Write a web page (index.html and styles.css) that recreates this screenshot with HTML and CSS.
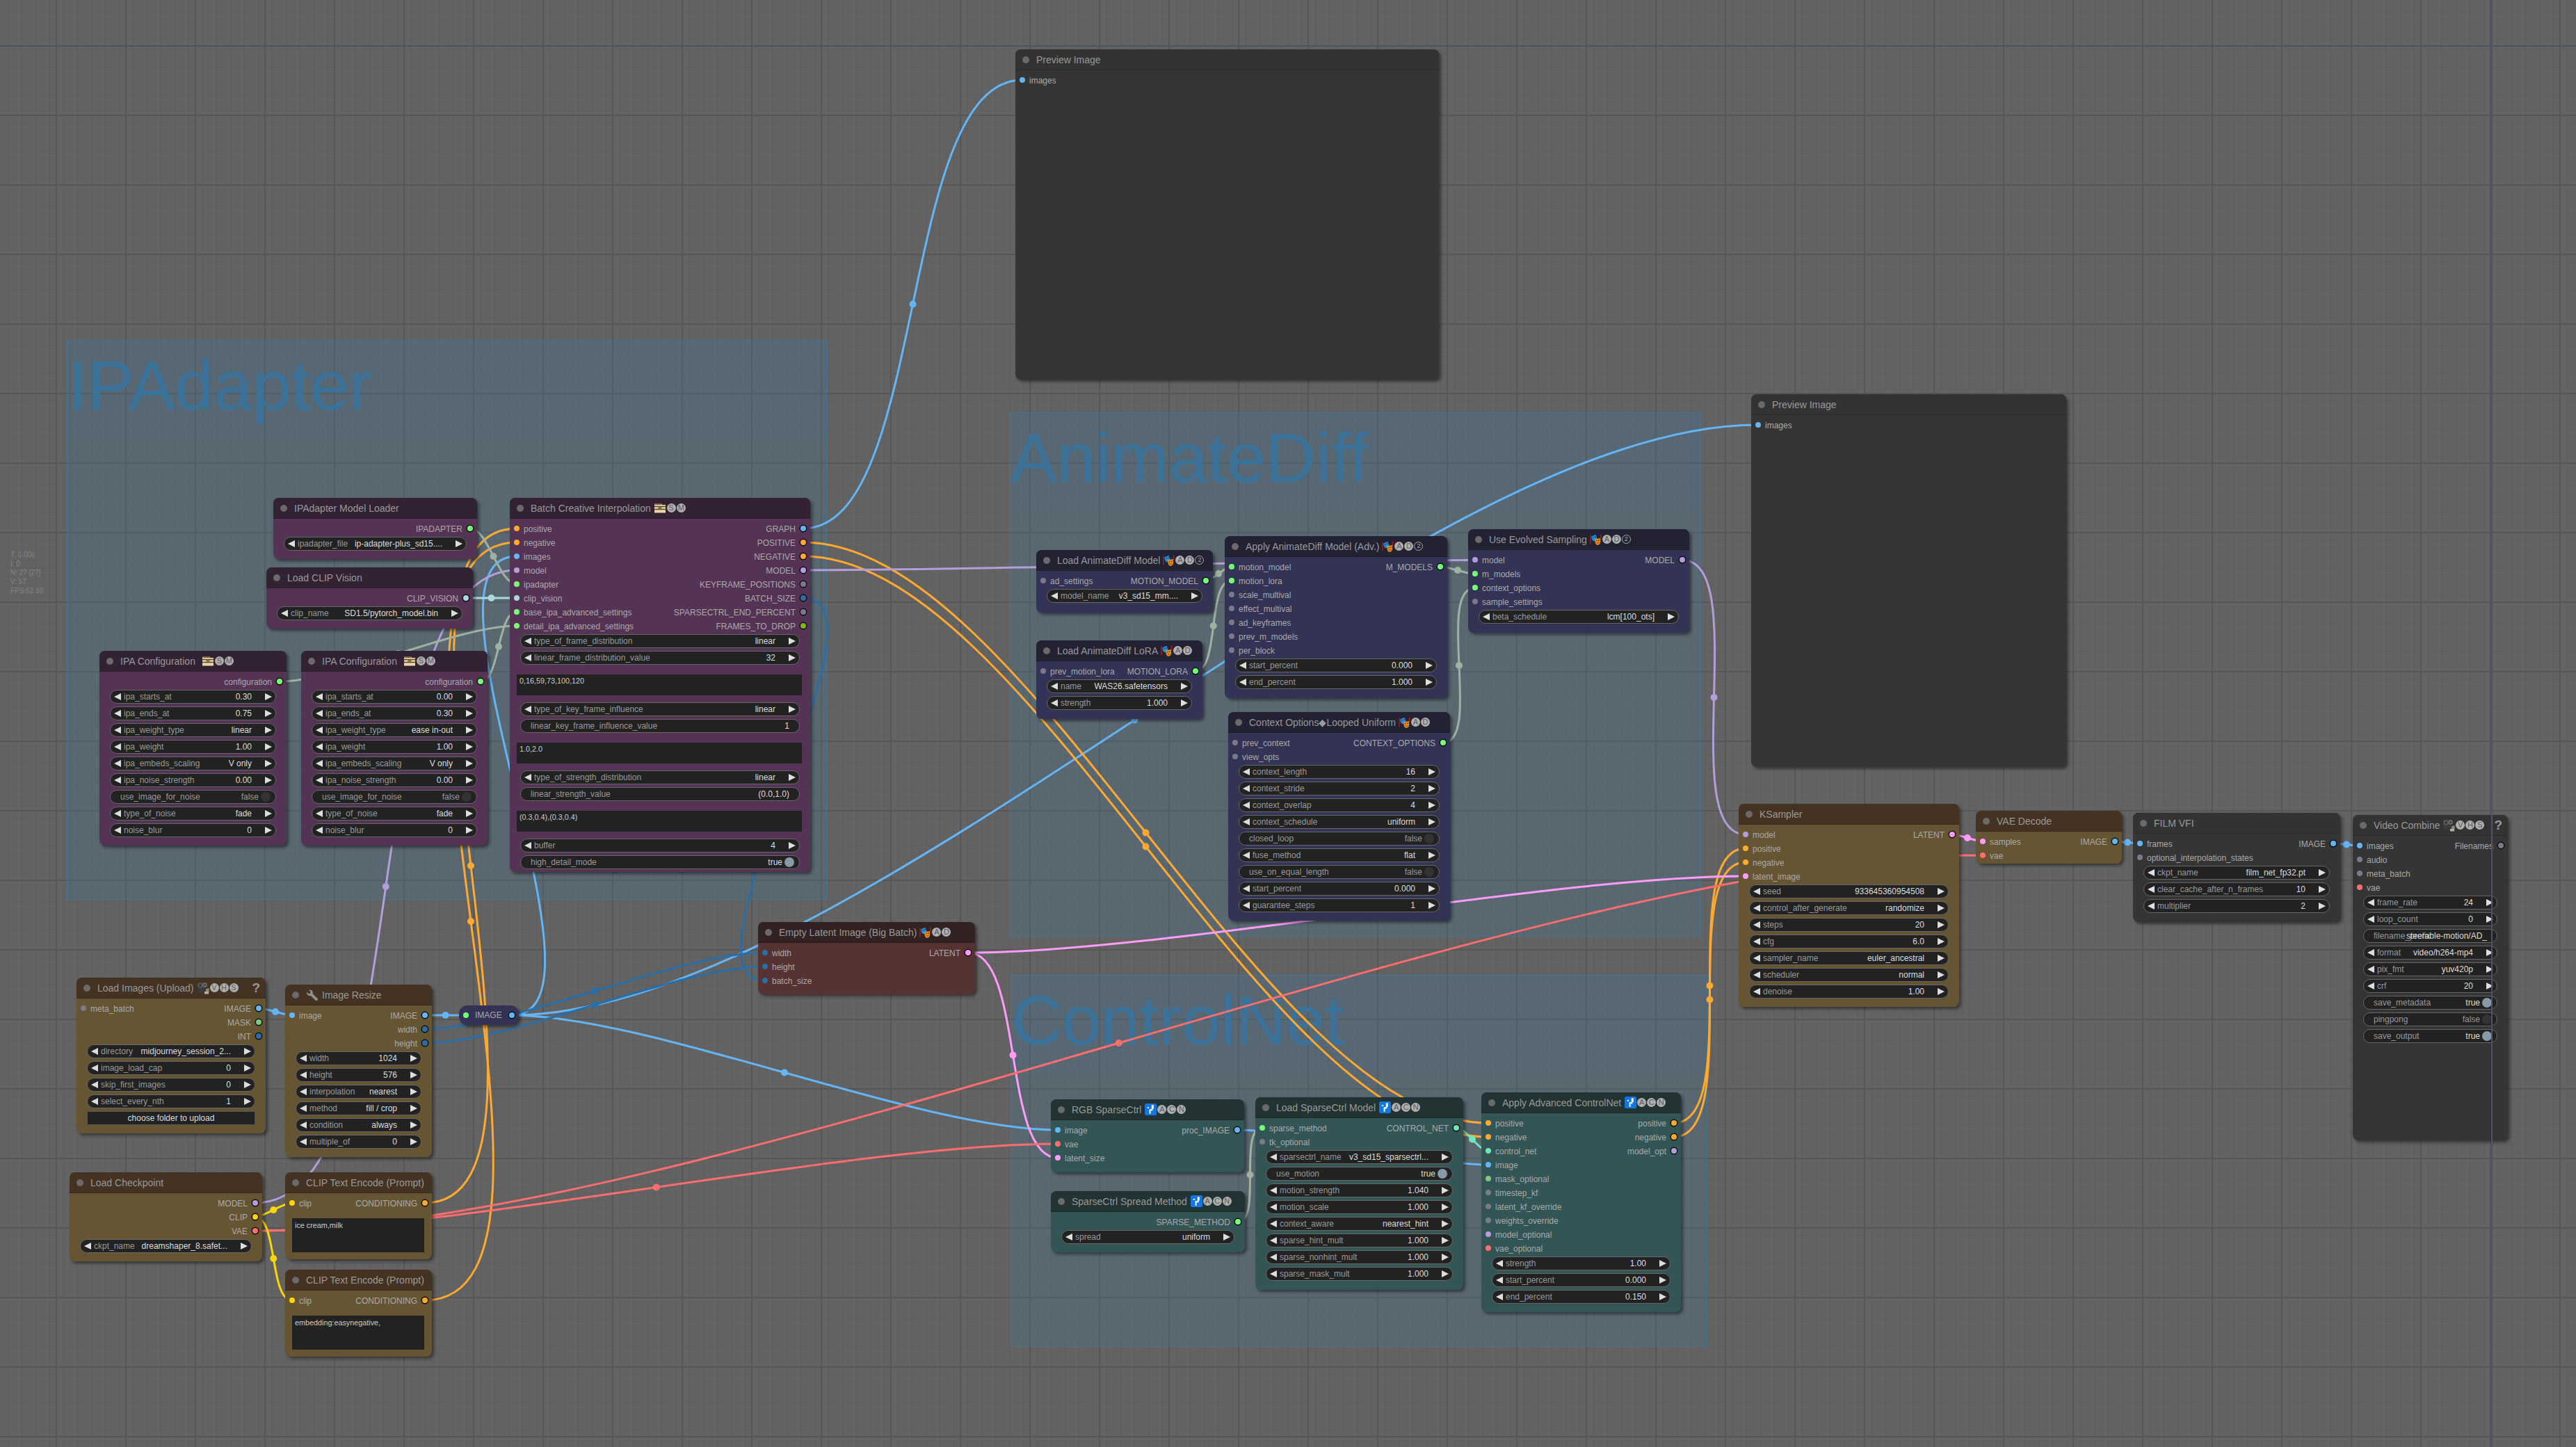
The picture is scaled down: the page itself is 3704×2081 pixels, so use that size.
FILE: index.html
```html
<!DOCTYPE html>
<html lang="en">
<head>
<meta charset="utf-8">
<title>ComfyUI workflow</title>
<link rel="stylesheet" href="styles.css">
</head>
<body>
<svg class="defs" width="0" height="0" aria-hidden="true">
  <symbol id="i-masks" viewBox="0 0 18 18">
    <path d="M1.2 2v13.5M16.6 .8v8" stroke="#b5211b" stroke-width="1.3" fill="none"/>
    <path d="M2.4 4.2 9 1.2l1.8 5.6c.4 2.400-1 4.200-3.200 4.600-2.300.2-3.800-1.200-4.400-3.200z" fill="#1e8fe2"/>
    <circle cx="5.200" cy="5.800" r=".9" fill="#0b3a66"/><circle cx="8.300" cy="4.800" r=".9" fill="#0b3a66"/>
    <path d="M7.600 8.200 15.700 7l.5 5.800c-.4 2.800-2.200 4.500-4.500 4.800-2.300-.6-3.600-2.400-3.700-4.800z" fill="#e38a1f"/>
    <circle cx="10.400" cy="10.600" r=".9" fill="#6b3a08"/><circle cx="13.700" cy="10.200" r=".9" fill="#6b3a08"/>
    <path d="M10.300 14c1.500.8 2.800.6 4-.4" stroke="#6b3a08" stroke-width=".9" fill="none"/>
  </symbol>
  <symbol id="i-box" viewBox="0 0 18 15">
    <path d="M2 1h9l1 2h5v11.500H1V3z" fill="#e8d6a6"/>
    <path d="M1 5.500h16M1 9.500h16M6.500 7.500h5" stroke="#5c4a30" stroke-width="1.300"/>
    <path d="M2 1h9v2H2z" fill="#7a6240"/>
  </symbol>
  <symbol id="i-pass" viewBox="0 0 17 17">
    <rect width="17" height="17" rx="2.500" fill="#1277e0"/>
    <path d="M9.800 2.200h3v5.600h-1.400v2.400H8.600v4.600H6.600V8.200h3.200zM3.800 5h2.400v1.800H3.800z" fill="#fff"/>
  </symbol>
  <symbol id="i-cam" viewBox="0 0 18 18">
    <rect x="1" y="8" width="12" height="8" rx="1" fill="#3a3a3a"/>
    <circle cx="5" cy="5" r="4" fill="#555"/><circle cx="11.500" cy="4.500" r="3.500" fill="#666"/>
    <circle cx="5" cy="5" r="1.300" fill="#222"/><circle cx="11.500" cy="4.500" r="1.100" fill="#222"/>
    <path d="M13 10.500 17.500 9v6L13 13.500z" fill="#8a8a8a"/>
    <rect x="11" y="14" width="6" height="3.500" fill="#b9b29a"/>
  </symbol>
  <symbol id="i-wrench" viewBox="0 0 16 16">
    <path d="M14.800 13.300 7.600 6.100c.5-1.700.1-3.400-1.100-4.500C5.200.4 3.500.1 2 .8l2.700 2.700-.9 1.900-2 .8L-.6 3.500c-.5 1.500-.2 3.200 1 4.400 1.200 1.200 2.900 1.500 4.400 1l7.300 7.200c.4.400 1.100.4 1.500 0l1.200-1.300c.4-.4.400-1.100 0-1.500z" fill="#8f8f8f" transform="translate(1)"/>
  </symbol>
</svg>

<main class="canvas">
  <section class="group g-ipa"><h2>IPAdapter</h2></section>
  <section class="group g-ad"><h2>AnimateDiff</h2></section>
  <section class="group g-cn"><h2>ControlNet</h2></section>

  <svg class="links" width="3704" height="2081" viewBox="0 0 3704 2081" aria-hidden="true">
    <g class="lk l-img">
      <path d="M1155 760C1334.500 760 1290.500 115 1470 115"/><circle cx="1312.500" cy="437.500" r="5"/>
      <path d="M611 1460H670"/><circle cx="640.500" cy="1460" r="5"/>
      <path d="M372 1450C384 1450 408 1460 420 1460"/><circle cx="396" cy="1455" r="5"/>
      <path d="M735 1460C900 1460 578 800 743 800"/><circle cx="739" cy="1130" r="5"/>
      <path d="M735 1460C935.800 1460 1320.200 1625 1521 1625"/><circle cx="1128" cy="1542.500" r="5"/>
      <path d="M1779 1625C1870 1625 2049 1675 2140 1675"/><circle cx="1959.500" cy="1650" r="5"/>
      <path d="M735 1460C1231 1460 2032 611 2528 611"/><circle cx="1631.500" cy="1035.500" r="5"/>
      <path d="M3041 1210C3050 1210 3068 1213 3077 1213"/><circle cx="3059" cy="1211.500" r="5"/>
      <path d="M3354.500 1213C3364 1213 3383.400 1216 3393 1216"/><circle cx="3374" cy="1214.500" r="5"/>
    </g>
    <g class="lk l-int">
      <path d="M1155 860C1293 860 962 1410 1100 1410"/>
      <path d="M611 1480C736 1480 975 1370 1100 1370"/><circle cx="855.500" cy="1425" r="5"/>
      <path d="M611 1500C736 1500 975 1390 1100 1390"/><circle cx="855.500" cy="1445" r="5"/>
    </g>
    <g class="lk l-cond">
      <path d="M1155 780C1478 780 1817 1615 2140 1615"/><circle cx="1647.500" cy="1197.500" r="5"/>
      <path d="M1155 800C1478 800 1817 1635 2140 1635"/><circle cx="1647.500" cy="1217.500" r="5"/>
      <path d="M611 1730C856 1730 498 760 743 760"/><circle cx="677" cy="1245" r="5"/>
      <path d="M611 1870C885.500 1870 468.500 780 743 780"/><circle cx="677" cy="1325" r="5"/>
      <path d="M2407 1615C2509 1615 2408 1220 2510 1220"/><circle cx="2458.500" cy="1417.500" r="5"/>
      <path d="M2407 1635C2509 1635 2408 1240 2510 1240"/><circle cx="2458.500" cy="1437.500" r="5"/>
    </g>
    <g class="lk l-model">
      <path d="M1155 820C1396.500 820 1879.500 805.500 2121 805.500"/>
      <path d="M2419 805.500C2520 805.500 2409 1200 2510 1200"/><circle cx="2464.500" cy="1003" r="5"/>
      <path d="M366.500 1730C612.500 1730 497 820 743 820"/><circle cx="554.750" cy="1275" r="5"/>
    </g>
    <g class="lk l-sage">
      <path d="M676 760C702 760 717 840 743 840"/><circle cx="709.500" cy="800" r="5"/>
      <path d="M402 980C489.600 980 655.400 900 743 900"/><circle cx="572.500" cy="940" r="5"/>
      <path d="M691 980C719 980 715 880 743 880"/><circle cx="717" cy="930" r="5"/>
      <path d="M1734 835C1744.400 835 1760.100 815 1770.500 815"/><circle cx="1752" cy="825" r="5"/>
      <path d="M1719 965C1754 965 1735.500 835 1770.500 835"/><circle cx="1744.750" cy="900" r="5"/>
      <path d="M2071 815C2083.800 815 2108.200 825.500 2121 825.500"/><circle cx="2096" cy="820" r="5"/>
      <path d="M2075 1068C2131.800 1068 2064.200 845.500 2121 845.500"/><circle cx="2098" cy="957" r="5"/>
      <path d="M1780 1757C1815 1757 1780 1622 1815 1622"/><circle cx="1797.500" cy="1689.500" r="5"/>
    </g>
    <g class="lk l-vision">
      <path d="M670 860H743"/><circle cx="706.500" cy="860" r="5"/>
    </g>
    <g class="lk l-latent">
      <path d="M1392 1370C1673 1370 2229 1260 2510 1260"/>
      <path d="M1392 1370C1472.500 1370 1440.500 1665 1521 1665"/><circle cx="1456.500" cy="1517.500" r="5"/>
      <path d="M2806.500 1200C2817.900 1200 2839.600 1210 2851 1210"/><circle cx="2829" cy="1205" r="5"/>
    </g>
    <g class="lk l-vae">
      <path d="M366.500 1770C656.500 1770 1231 1645 1521 1645"/><circle cx="943.750" cy="1707.500" r="5"/>
      <path d="M366.500 1770C1002 1770 2215.400 1230 2851 1230"/><circle cx="1608.750" cy="1500" r="5"/>
    </g>
    <g class="lk l-clip">
      <path d="M366.500 1750C380.500 1750 406 1730 420 1730"/><circle cx="393.250" cy="1740" r="5"/>
      <path d="M366.500 1750C399.500 1750 387 1870 420 1870"/><circle cx="393.250" cy="1810" r="5"/>
    </g>
    <g class="lk l-cnet">
      <path d="M2094 1622C2108 1622 2126 1655 2140 1655"/><circle cx="2117" cy="1638.500" r="5"/>
    </g>
  </svg>

  <article class="node purple n-ipal">
    <header class="tt">IPAdapter Model Loader</header>
    <div class="slots"><div class="in"></div><div class="out"><div class="s c-new">IPADAPTER</div></div></div>
    <div class="ws"><div class="w a"><span>ipadapter_file</span><b>ip-adapter-plus_sd15....</b></div></div>
  </article>

  <article class="node purple n-clipv">
    <header class="tt">Load CLIP Vision</header>
    <div class="slots"><div class="in"></div><div class="out"><div class="s c-vis">CLIP_VISION</div></div></div>
    <div class="ws"><div class="w a"><span>clip_name</span><b>SD1.5/pytorch_model.bin</b></div></div>
  </article>

  <article class="node purple n-ipa1">
    <header class="tt">IPA Configuration<svg class="ic ic-box wide"><use href="#i-box"/></svg><span class="bd">S</span><span class="bd">M</span></header>
    <div class="slots"><div class="in"></div><div class="out"><div class="s c-new">configuration</div></div></div>
    <div class="ws">
      <div class="w a"><span>ipa_starts_at</span><b>0.30</b></div>
      <div class="w a"><span>ipa_ends_at</span><b>0.75</b></div>
      <div class="w a"><span>ipa_weight_type</span><b>linear</b></div>
      <div class="w a"><span>ipa_weight</span><b>1.00</b></div>
      <div class="w a"><span>ipa_embeds_scaling</span><b>V only</b></div>
      <div class="w a"><span>ipa_noise_strength</span><b>0.00</b></div>
      <div class="w t"><span>use_image_for_noise</span><b>false</b><i></i></div>
      <div class="w a"><span>type_of_noise</span><b>fade</b></div>
      <div class="w a"><span>noise_blur</span><b>0</b></div>
    </div>
  </article>

  <article class="node purple n-ipa2">
    <header class="tt">IPA Configuration<svg class="ic ic-box wide"><use href="#i-box"/></svg><span class="bd">S</span><span class="bd">M</span></header>
    <div class="slots"><div class="in"></div><div class="out"><div class="s c-new">configuration</div></div></div>
    <div class="ws">
      <div class="w a"><span>ipa_starts_at</span><b>0.00</b></div>
      <div class="w a"><span>ipa_ends_at</span><b>0.30</b></div>
      <div class="w a"><span>ipa_weight_type</span><b>ease in-out</b></div>
      <div class="w a"><span>ipa_weight</span><b>1.00</b></div>
      <div class="w a"><span>ipa_embeds_scaling</span><b>V only</b></div>
      <div class="w a"><span>ipa_noise_strength</span><b>0.00</b></div>
      <div class="w t"><span>use_image_for_noise</span><b>false</b><i></i></div>
      <div class="w a"><span>type_of_noise</span><b>fade</b></div>
      <div class="w a"><span>noise_blur</span><b>0</b></div>
    </div>
  </article>

  <article class="node purple n-batch">
    <header class="tt">Batch Creative Interpolation<svg class="ic ic-box"><use href="#i-box"/></svg><span class="bd">S</span><span class="bd">M</span></header>
    <div class="slots">
      <div class="in">
        <div class="s c-cond">positive</div><div class="s c-cond">negative</div><div class="s c-img">images</div><div class="s c-model">model</div>
        <div class="s c-new">ipadapter</div><div class="s c-vis">clip_vision</div><div class="s c-new">base_ipa_advanced_settings</div><div class="s c-new">detail_ipa_advanced_settings</div>
      </div>
      <div class="out">
        <div class="s c-img">GRAPH</div><div class="s c-cond">POSITIVE</div><div class="s c-cond">NEGATIVE</div><div class="s c-model">MODEL</div>
        <div class="s c-any">KEYFRAME_POSITIONS</div><div class="s c-int">BATCH_SIZE</div><div class="s c-any">SPARSECTRL_END_PERCENT</div><div class="s c-olive">FRAMES_TO_DROP</div>
      </div>
    </div>
    <div class="ws">
      <div class="w a"><span>type_of_frame_distribution</span><b>linear</b></div>
      <div class="w a"><span>linear_frame_distribution_value</span><b>32</b></div>
      <div class="ta">0,16,59,73,100,120</div>
      <div class="w a"><span>type_of_key_frame_influence</span><b>linear</b></div>
      <div class="w x"><span>linear_key_frame_influence_value</span><b>1</b></div>
      <div class="ta">1.0,2.0</div>
      <div class="w a"><span>type_of_strength_distribution</span><b>linear</b></div>
      <div class="w x"><span>linear_strength_value</span><b>(0.0,1.0)</b></div>
      <div class="ta">(0.3,0.4),(0.3,0.4)</div>
      <div class="w a"><span>buffer</span><b>4</b></div>
      <div class="w t on"><span>high_detail_mode</span><b>true</b><i></i></div>
    </div>
  </article>

  <article class="node yellow n-limg">
    <header class="tt">Load Images (Upload)<svg class="ic ic-cam"><use href="#i-cam"/></svg><span class="bd">V</span><span class="bd">H</span><span class="bd">S</span><span class="q">?</span></header>
    <div class="slots">
      <div class="in"><div class="s c-any">meta_batch</div></div>
      <div class="out"><div class="s c-img">IMAGE</div><div class="s c-mask">MASK</div><div class="s c-int">INT</div></div>
    </div>
    <div class="ws">
      <div class="w a"><span>directory</span><b>midjourney_session_2...</b></div>
      <div class="w a"><span>image_load_cap</span><b>0</b></div>
      <div class="w a"><span>skip_first_images</span><b>0</b></div>
      <div class="w a"><span>select_every_nth</span><b>1</b></div>
      <button class="btn" type="button">choose folder to upload</button>
    </div>
  </article>

  <article class="node yellow n-resize">
    <header class="tt"><svg class="ic ic-wrench"><use href="#i-wrench"/></svg>Image Resize</header>
    <div class="slots">
      <div class="in"><div class="s c-img">image</div></div>
      <div class="out"><div class="s c-img">IMAGE</div><div class="s c-int">width</div><div class="s c-int">height</div></div>
    </div>
    <div class="ws">
      <div class="w a"><span>width</span><b>1024</b></div>
      <div class="w a"><span>height</span><b>576</b></div>
      <div class="w a"><span>interpolation</span><b>nearest</b></div>
      <div class="w a"><span>method</span><b>fill / crop</b></div>
      <div class="w a"><span>condition</span><b>always</b></div>
      <div class="w a"><span>multiple_of</span><b>0</b></div>
    </div>
  </article>

  <div class="reroute n-rr"><div class="s c-new">IMAGE</div><span class="rr-out"></span></div>

  <article class="node yellow n-ckpt">
    <header class="tt">Load Checkpoint</header>
    <div class="slots"><div class="in"></div><div class="out"><div class="s c-model">MODEL</div><div class="s c-clip">CLIP</div><div class="s c-vae">VAE</div></div></div>
    <div class="ws"><div class="w a"><span>ckpt_name</span><b>dreamshaper_8.safet...</b></div></div>
  </article>

  <article class="node yellow n-clip1">
    <header class="tt">CLIP Text Encode (Prompt)</header>
    <div class="slots"><div class="in"><div class="s c-clip">clip</div></div><div class="out"><div class="s c-cond">CONDITIONING</div></div></div>
    <div class="ta wide">ice cream,milk</div>
  </article>

  <article class="node yellow n-clip2">
    <header class="tt">CLIP Text Encode (Prompt)</header>
    <div class="slots"><div class="in"><div class="s c-clip">clip</div></div><div class="out"><div class="s c-cond">CONDITIONING</div></div></div>
    <div class="ta wide">embedding:easynegative,</div>
  </article>

  <article class="node red n-latent">
    <header class="tt">Empty Latent Image (Big Batch)<svg class="ic ic-masks"><use href="#i-masks"/></svg><span class="bd">A</span><span class="bd">D</span></header>
    <div class="slots">
      <div class="in"><div class="s c-int">width</div><div class="s c-int">height</div><div class="s c-int">batch_size</div></div>
      <div class="out"><div class="s c-latent">LATENT</div></div>
    </div>
  </article>

  <article class="node blue n-adm">
    <header class="tt">Load AnimateDiff Model<svg class="ic ic-masks"><use href="#i-masks"/></svg><span class="bd">A</span><span class="bd">D</span><span class="bd ring">2</span></header>
    <div class="slots"><div class="in"><div class="s c-any">ad_settings</div></div><div class="out"><div class="s c-new">MOTION_MODEL</div></div></div>
    <div class="ws"><div class="w a"><span>model_name</span><b>v3_sd15_mm....</b></div></div>
  </article>

  <article class="node blue n-apply">
    <header class="tt">Apply AnimateDiff Model (Adv.)<svg class="ic ic-masks"><use href="#i-masks"/></svg><span class="bd">A</span><span class="bd">D</span><span class="bd ring">2</span></header>
    <div class="slots">
      <div class="in">
        <div class="s c-new">motion_model</div><div class="s c-new">motion_lora</div><div class="s c-any">scale_multival</div><div class="s c-any">effect_multival</div>
        <div class="s c-any">ad_keyframes</div><div class="s c-any">prev_m_models</div><div class="s c-any">per_block</div>
      </div>
      <div class="out"><div class="s c-new">M_MODELS</div></div>
    </div>
    <div class="ws">
      <div class="w a"><span>start_percent</span><b>0.000</b></div>
      <div class="w a"><span>end_percent</span><b>1.000</b></div>
    </div>
  </article>

  <article class="node blue n-evo">
    <header class="tt">Use Evolved Sampling<svg class="ic ic-masks"><use href="#i-masks"/></svg><span class="bd">A</span><span class="bd">D</span><span class="bd ring">2</span></header>
    <div class="slots">
      <div class="in"><div class="s c-model">model</div><div class="s c-new">m_models</div><div class="s c-new">context_options</div><div class="s c-any">sample_settings</div></div>
      <div class="out"><div class="s c-model">MODEL</div></div>
    </div>
    <div class="ws"><div class="w a"><span>beta_schedule</span><b>lcm[100_ots]</b></div></div>
  </article>

  <article class="node blue n-lora">
    <header class="tt">Load AnimateDiff LoRA<svg class="ic ic-masks"><use href="#i-masks"/></svg><span class="bd">A</span><span class="bd">D</span></header>
    <div class="slots"><div class="in"><div class="s c-any">prev_motion_lora</div></div><div class="out"><div class="s c-new">MOTION_LORA</div></div></div>
    <div class="ws">
      <div class="w a"><span>name</span><b>WAS26.safetensors</b></div>
      <div class="w a"><span>strength</span><b>1.000</b></div>
    </div>
  </article>

  <article class="node blue n-ctx">
    <header class="tt">Context Options◆Looped Uniform<svg class="ic ic-masks"><use href="#i-masks"/></svg><span class="bd">A</span><span class="bd">D</span></header>
    <div class="slots">
      <div class="in"><div class="s c-any">prev_context</div><div class="s c-any">view_opts</div></div>
      <div class="out"><div class="s c-new">CONTEXT_OPTIONS</div></div>
    </div>
    <div class="ws">
      <div class="w a"><span>context_length</span><b>16</b></div>
      <div class="w a"><span>context_stride</span><b>2</b></div>
      <div class="w a"><span>context_overlap</span><b>4</b></div>
      <div class="w a"><span>context_schedule</span><b>uniform</b></div>
      <div class="w t"><span>closed_loop</span><b>false</b><i></i></div>
      <div class="w a"><span>fuse_method</span><b>flat</b></div>
      <div class="w t"><span>use_on_equal_length</span><b>false</b><i></i></div>
      <div class="w a"><span>start_percent</span><b>0.000</b></div>
      <div class="w a"><span>guarantee_steps</span><b>1</b></div>
    </div>
  </article>

  <article class="node n-prev1">
    <header class="tt">Preview Image</header>
    <div class="slots"><div class="in"><div class="s c-img">images</div></div></div>
  </article>

  <article class="node n-prev2">
    <header class="tt">Preview Image</header>
    <div class="slots"><div class="in"><div class="s c-img">images</div></div></div>
  </article>

  <article class="node cyan n-rgb">
    <header class="tt">RGB SparseCtrl<svg class="ic ic-pass"><use href="#i-pass"/></svg><span class="bd">A</span><span class="bd">C</span><span class="bd">N</span></header>
    <div class="slots">
      <div class="in"><div class="s c-img">image</div><div class="s c-vae">vae</div><div class="s c-latent">latent_size</div></div>
      <div class="out"><div class="s c-img">proc_IMAGE</div></div>
    </div>
  </article>

  <article class="node cyan n-spread">
    <header class="tt">SparseCtrl Spread Method<svg class="ic ic-pass"><use href="#i-pass"/></svg><span class="bd">A</span><span class="bd">C</span><span class="bd">N</span></header>
    <div class="slots"><div class="in"></div><div class="out"><div class="s c-new">SPARSE_METHOD</div></div></div>
    <div class="ws"><div class="w a"><span>spread</span><b>uniform</b></div></div>
  </article>

  <article class="node cyan n-lsp">
    <header class="tt">Load SparseCtrl Model<svg class="ic ic-pass"><use href="#i-pass"/></svg><span class="bd">A</span><span class="bd">C</span><span class="bd">N</span></header>
    <div class="slots">
      <div class="in"><div class="s c-new">sparse_method</div><div class="s c-any">tk_optional</div></div>
      <div class="out"><div class="s c-cnet">CONTROL_NET</div></div>
    </div>
    <div class="ws">
      <div class="w a"><span>sparsectrl_name</span><b>v3_sd15_sparsectrl...</b></div>
      <div class="w t on"><span>use_motion</span><b>true</b><i></i></div>
      <div class="w a"><span>motion_strength</span><b>1.040</b></div>
      <div class="w a"><span>motion_scale</span><b>1.000</b></div>
      <div class="w a"><span>context_aware</span><b>nearest_hint</b></div>
      <div class="w a"><span>sparse_hint_mult</span><b>1.000</b></div>
      <div class="w a"><span>sparse_nonhint_mult</span><b>1.000</b></div>
      <div class="w a"><span>sparse_mask_mult</span><b>1.000</b></div>
    </div>
  </article>

  <article class="node cyan n-acn">
    <header class="tt">Apply Advanced ControlNet<svg class="ic ic-pass"><use href="#i-pass"/></svg><span class="bd">A</span><span class="bd">C</span><span class="bd">N</span></header>
    <div class="slots">
      <div class="in">
        <div class="s c-cond">positive</div><div class="s c-cond">negative</div><div class="s c-cnet">control_net</div><div class="s c-img">image</div><div class="s c-mask">mask_optional</div>
        <div class="s c-any">timestep_kf</div><div class="s c-any">latent_kf_override</div><div class="s c-any">weights_override</div><div class="s c-model">model_optional</div><div class="s c-vae">vae_optional</div>
      </div>
      <div class="out"><div class="s c-cond">positive</div><div class="s c-cond">negative</div><div class="s c-model">model_opt</div></div>
    </div>
    <div class="ws">
      <div class="w a"><span>strength</span><b>1.00</b></div>
      <div class="w a"><span>start_percent</span><b>0.000</b></div>
      <div class="w a"><span>end_percent</span><b>0.150</b></div>
    </div>
  </article>

  <article class="node yellow n-ks">
    <header class="tt">KSampler</header>
    <div class="slots">
      <div class="in"><div class="s c-model">model</div><div class="s c-cond">positive</div><div class="s c-cond">negative</div><div class="s c-latent">latent_image</div></div>
      <div class="out"><div class="s c-latent">LATENT</div></div>
    </div>
    <div class="ws">
      <div class="w a"><span>seed</span><b>933645360954508</b></div>
      <div class="w a"><span>control_after_generate</span><b>randomize</b></div>
      <div class="w a"><span>steps</span><b>20</b></div>
      <div class="w a"><span>cfg</span><b>6.0</b></div>
      <div class="w a"><span>sampler_name</span><b>euler_ancestral</b></div>
      <div class="w a"><span>scheduler</span><b>normal</b></div>
      <div class="w a"><span>denoise</span><b>1.00</b></div>
    </div>
  </article>

  <article class="node yellow n-vae">
    <header class="tt">VAE Decode</header>
    <div class="slots">
      <div class="in"><div class="s c-latent">samples</div><div class="s c-vae">vae</div></div>
      <div class="out"><div class="s c-img">IMAGE</div></div>
    </div>
  </article>

  <article class="node n-film">
    <header class="tt">FILM VFI</header>
    <div class="slots">
      <div class="in"><div class="s c-img">frames</div><div class="s c-any">optional_interpolation_states</div></div>
      <div class="out"><div class="s c-img">IMAGE</div></div>
    </div>
    <div class="ws">
      <div class="w a"><span>ckpt_name</span><b>film_net_fp32.pt</b></div>
      <div class="w a"><span>clear_cache_after_n_frames</span><b>10</b></div>
      <div class="w a"><span>multiplier</span><b>2</b></div>
    </div>
  </article>

  <article class="node n-video">
    <header class="tt">Video Combine<svg class="ic ic-cam"><use href="#i-cam"/></svg><span class="bd">V</span><span class="bd">H</span><span class="bd">S</span><span class="q">?</span></header>
    <div class="slots">
      <div class="in"><div class="s c-img">images</div><div class="s c-any">audio</div><div class="s c-any">meta_batch</div><div class="s c-vae">vae</div></div>
      <div class="out"><div class="s c-any">Filenames</div></div>
    </div>
    <div class="ws">
      <div class="w a"><span>frame_rate</span><b>24</b></div>
      <div class="w a"><span>loop_count</span><b>0</b></div>
      <div class="w x"><span>filename_prefix</span><b>steerable-motion/AD_</b></div>
      <div class="w a"><span>format</span><b>video/h264-mp4</b></div>
      <div class="w a"><span>pix_fmt</span><b>yuv420p</b></div>
      <div class="w a"><span>crf</span><b>20</b></div>
      <div class="w t on"><span>save_metadata</span><b>true</b><i></i></div>
      <div class="w t"><span>pingpong</span><b>false</b><i></i></div>
      <div class="w t on"><span>save_output</span><b>true</b><i></i></div>
    </div>
  </article>

  <aside class="stats">
    <div>T: 0.00s</div>
    <div>I: 0</div>
    <div>N: 27 [27]</div>
    <div>V: 57</div>
    <div>FPS:62.50</div>
  </aside>
</main>
</body>
</html>
```

FILE: styles.css
```css
* { box-sizing: border-box; }
html, body { margin: 0; padding: 0; background: #636363; }
.defs { position: absolute; }

.canvas {
  position: relative;
  width: 3704px;
  height: 2081px;
  overflow: hidden;
  font: 12px/1 "Liberation Sans", Arial, sans-serif;
  background-color: #636363;
  background-image:
    linear-gradient(90deg, #565656 2px, transparent 2px),
    linear-gradient(180deg, #565656 2px, transparent 2px),
    linear-gradient(90deg, #5e5e5e 1px, transparent 1px),
    linear-gradient(180deg, #5e5e5e 1px, transparent 1px);
  background-size: 100px 100px, 100px 100px, 10px 10px, 10px 10px;
  background-position: 80px 0, 0 65px, 1px 0, 0 6px;
}
.canvas::before, .canvas::after { content: ""; position: absolute; background: #4d5468; }
.canvas::before { left: 0; right: 0; top: 65px; height: 2px; }
.canvas::after { top: 0; bottom: 0; left: 3582px; width: 2px; }

/* groups */
.group {
  position: absolute;
  background: rgba(63, 120, 158, .25);
  border: 1px solid rgba(63, 120, 158, .75);
}
.group h2 {
  margin: 0;
  height: 140px;
  padding-left: 1px;
  font: 400 100px/128px "Liberation Sans", Arial, sans-serif;
  color: #3a7299;
  background: rgba(63, 120, 158, .05);
  white-space: nowrap;
}
.g-ipa { left: 96px; top: 489px; width: 1093px; height: 805px; }
.g-ad { left: 1451px; top: 593px; width: 994px; height: 754px; }
.g-cn { left: 1453px; top: 1402px; width: 1002px; height: 535px; }

/* links */
.links { position: absolute; left: 0; top: 0; }
.lk path { fill: none; stroke: currentColor; stroke-width: 3; }
.lk circle { fill: currentColor; }
.l-img { color: #64b5f6; }
.l-int { color: #2a6ea5; }
.l-cond { color: #ffa931; }
.l-model { color: #b39ddb; }
.l-sage { color: #9fb2a2; }
.l-vision { color: #a8dadc; }
.l-latent { color: #ff9cf9; }
.l-vae { color: #ff6e6e; }
.l-clip { color: #ffd500; }
.l-cnet { color: #6ee7b7; }

/* nodes */
.node {
  position: absolute;
  --body: #353535;
  --head: #333333;
  background: var(--body);
  border-radius: 8px;
  box-shadow: 3px 3px 4px rgba(0, 0, 0, .45);
  color: #aaa;
}
.purple { --body: #553355; --head: #332233; }
.yellow { --body: #665533; --head: #443322; }
.blue { --body: #333355; --head: #222233; }
.cyan { --body: #335555; --head: #223333; }
.red { --body: #553333; --head: #332222; }

.tt {
  display: flex;
  align-items: center;
  height: 30px;
  padding-left: 10px;
  background: var(--head);
  border-radius: 8px 8px 0 0;
  border-bottom: 1px solid rgba(0, 0, 0, .18);
  color: #999;
  font-size: 14px;
  white-space: nowrap;
}
.tt::before {
  content: "";
  flex: none;
  width: 10px;
  height: 10px;
  margin-right: 10px;
  border-radius: 50%;
  background: #6a6a6a;
}
.ic { flex: none; margin-left: 4px; }
.ic-masks { width: 17px; height: 18px; }
.ic-box { width: 18px; height: 15px; }
.ic-box.wide { margin-left: 9px; }
.ic-pass { width: 17px; height: 17px; margin-left: 5px; }
.ic-cam { width: 18px; height: 18px; }
.ic-wrench { width: 16px; height: 16px; margin: 0 6px 0 1px; }
.bd {
  flex: none;
  width: 13px;
  height: 13px;
  margin-left: 1px;
  border-radius: 50%;
  background: #b0b0b0;
  color: #5a5a5a;
  font-size: 11px;
  line-height: 13px;
  text-align: center;
}
.bd.ring { background: none; border: 1px solid #a9a9a9; color: #a9a9a9; font-size: 9px; line-height: 11px; }
.q { margin-left: auto; margin-right: 8px; font-size: 19px; font-weight: 700; color: #999; }

/* slots */
.slots { display: flex; justify-content: space-between; }
.in { padding-left: 6px; }
.out { padding-right: 6px; }
.s {
  display: flex;
  gap: 6px;
  height: 20px;
  line-height: 30px;
  white-space: nowrap;
}
.s::before {
  content: "";
  flex: none;
  width: 8px;
  height: 8px;
  margin-top: 10px;
  border-radius: 50%;
  background: var(--c);
}
.out .s { flex-direction: row-reverse; gap: 7px; }
.out .s::before { box-shadow: 0 0 0 1.500px #111; }
.c-img { --c: #64b5f6; }
.c-int { --c: #2a6ea5; }
.c-cond { --c: #ffa931; }
.c-model { --c: #b39ddb; }
.c-clip { --c: #ffd500; }
.c-vae { --c: #ff6e6e; }
.c-latent { --c: #ff9cf9; }
.c-mask { --c: #81c784; }
.c-vis { --c: #a8dadc; }
.c-cnet { --c: #6ee7b7; }
.c-new { --c: #77ff77; }
.c-any { --c: #7a7a8c; }
.c-olive { --c: #7fb518; }

/* widgets */
.ws { display: flex; flex-direction: column; gap: 4px; padding: 6px 15px 0; }
.w {
  display: flex;
  align-items: center;
  flex: none;
  height: 20px;
  background: #222;
  border: 1px solid #666;
  border-radius: 10px;
  color: #999;
  line-height: 18px;
  white-space: nowrap;
}
.w span { flex: 1 1 0; min-width: 0; }
.w b { flex: none; font-weight: 400; color: #ddd; }
.a::before, .a::after {
  content: "";
  flex: none;
  border-style: solid;
  border-color: transparent;
}
.a::before { margin: 0 4px 0 5px; border-width: 5px 10px 5px 0; border-right-color: #ddd; }
.a::after { margin: 0 5px 0 19px; border-width: 5px 0 5px 10px; border-left-color: #ddd; }
.x { padding: 0 14px; }
.t { padding-left: 14px; }
.t b { color: #999; }
.t i { flex: none; width: 14px; height: 14px; margin: 0 7px 0 3px; border-radius: 50%; background: #333; }
.t.on b { color: #ddd; }
.t.on i { background: #8899aa; }
.btn {
  height: 20px;
  padding: 0;
  background: #222;
  border: 1px solid #555;
  color: #ddd;
  font: 12px "Liberation Sans", Arial, sans-serif;
}
.ta {
  height: 30px;
  margin: 10px -3px 6px -5px;
  padding: 3px 4px;
  background: #222;
  color: #ccc;
  font-size: 10.800px;
  line-height: 13px;
}
.ta.wide { height: 49px; margin: 16px 11px 0 10px; padding: 4px; }

/* reroute pill */
.reroute {
  position: absolute;
  display: flex;
  justify-content: space-between;
  padding: 0 6px;
  background: #333355;
  border-radius: 12px;
  box-shadow: 3px 3px 4px rgba(0, 0, 0, .45);
  color: #aaa;
}
.reroute .s { gap: 9px; line-height: 29px; height: 28px; }
.rr-out { width: 8px; height: 8px; margin: 10px 0 0; border-radius: 50%; background: #64b5f6; box-shadow: 0 0 0 1.500px #111; }

/* stats read-out */
.stats {
  position: absolute;
  left: 15px;
  top: 791px;
  color: #848484;
  font-size: 10px;
  line-height: 13px;
}

/* free-canvas places of the nodes */
.n-ipal { left: 393px; top: 716px; width: 293px; height: 88px; }
.n-clipv { left: 383px; top: 816px; width: 297px; height: 88px; }
.n-ipa1 { left: 143px; top: 936px; width: 269px; height: 280px; }
.n-ipa2 { left: 433px; top: 936px; width: 268px; height: 280px; }
.n-batch { left: 733px; top: 716px; width: 432px; height: 538px; }
.n-limg { left: 110px; top: 1406px; width: 272px; height: 224px; }
.n-resize { left: 410px; top: 1416px; width: 211px; height: 248px; }
.n-rr { left: 660px; top: 1446px; width: 86px; height: 28px; }
.n-ckpt { left: 100px; top: 1686px; width: 277px; height: 128px; }
.n-clip1 { left: 410px; top: 1686px; width: 211px; height: 125px; }
.n-clip2 { left: 410px; top: 1826px; width: 211px; height: 125px; }
.n-latent { left: 1090px; top: 1326px; width: 312px; height: 104px; }
.n-adm { left: 1490px; top: 791px; width: 254px; height: 90px; }
.n-apply { left: 1761px; top: 771px; width: 320px; height: 233px; }
.n-evo { left: 2111px; top: 761px; width: 318px; height: 149px; }
.n-lora { left: 1490px; top: 921px; width: 239px; height: 113px; }
.n-ctx { left: 1766px; top: 1024px; width: 319px; height: 300px; }
.n-prev1 { left: 1460px; top: 71px; width: 609px; height: 475px; }
.n-prev2 { left: 2518px; top: 567px; width: 453px; height: 536px; }
.n-rgb { left: 1511px; top: 1581px; width: 278px; height: 105px; }
.n-spread { left: 1511px; top: 1713px; width: 279px; height: 88px; }
.n-lsp { left: 1805px; top: 1578px; width: 299px; height: 277px; }
.n-acn { left: 2130px; top: 1571px; width: 287px; height: 316px; }
.n-ks { left: 2500px; top: 1156px; width: 317px; height: 292px; }
.n-vae { left: 2841px; top: 1166px; width: 210px; height: 76px; }
.n-film { left: 3067px; top: 1169px; width: 298px; height: 157px; }
.n-video { left: 3383px; top: 1172px; width: 223px; height: 468px; }
```
